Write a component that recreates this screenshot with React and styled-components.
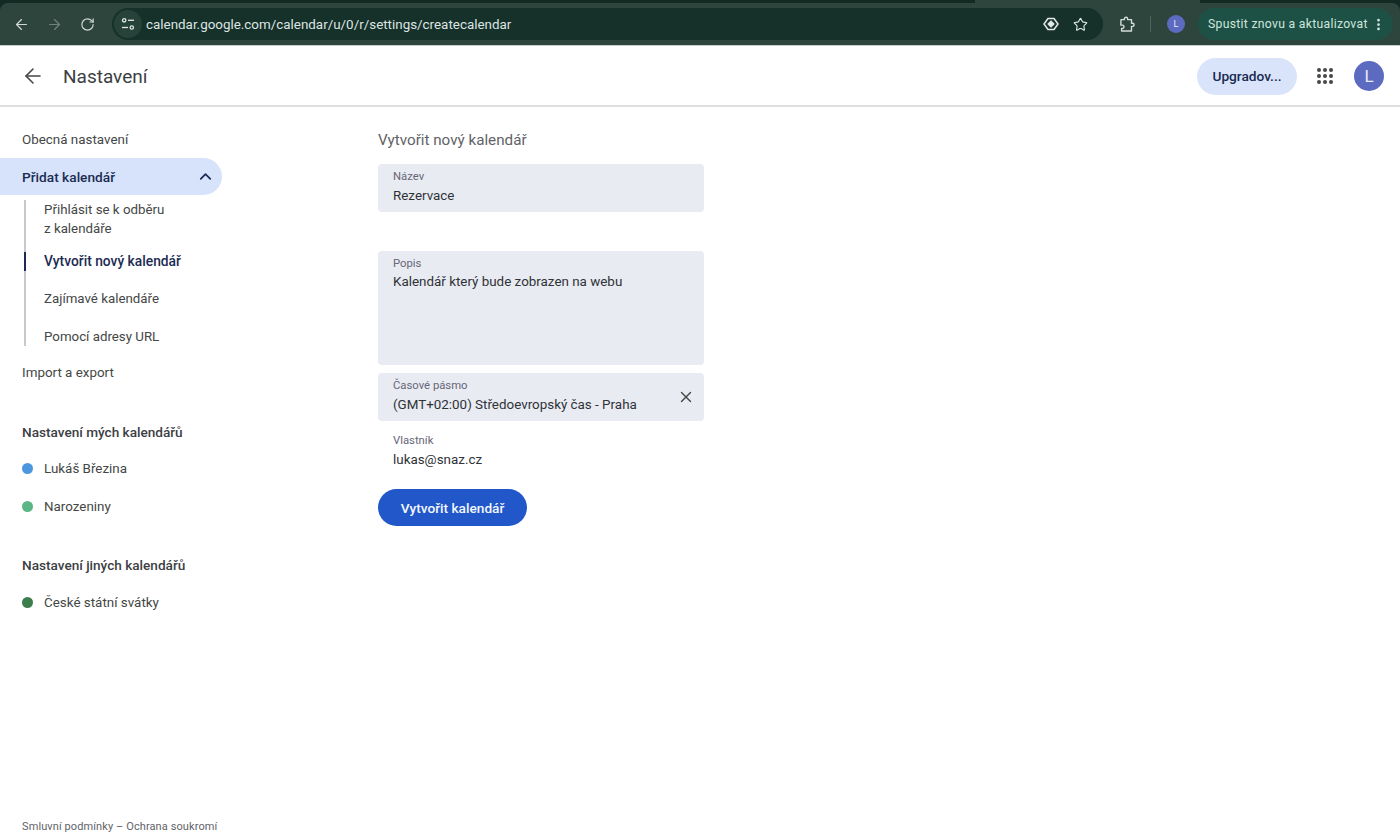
import React from "react";
import styled, { createGlobalStyle } from "styled-components";
import { ArrowLeft, ArrowRight, RotateCw, Star, X, ChevronUp, EllipsisVertical } from "lucide-react";

const Global = createGlobalStyle`
  html, body { margin: 0; padding: 0; background: #fff; }
  body { font-family: Roboto, "Noto Sans", "Liberation Sans", sans-serif; overflow: hidden; }
  * { box-sizing: border-box; }
`;

const Page = styled.div`
  width: 1400px; height: 840px; display: flex; flex-direction: column; overflow: hidden;
`;

const Chrome = styled.div`
  height: 46px; background: #122a24; position: relative; padding-top: 3px; flex: none;
`;
const TabJoin = styled.div`
  position: absolute; left: 975px; width: 225px; top: 0; height: 3px; background: #2e453e;
`;
const Toolbar = styled.div`
  height: 43px; background: #2e453e; border-radius: 8px 8px 0 0; display: flex; align-items: center;
  padding: 0 7px 0 0; border-bottom: 1px solid #c9cdcb;
`;
const NavIcons = styled.div`
  display: flex; align-items: center; width: 112px; padding-left: 13px; gap: 16px; flex: none;
`;
const NavIcon = styled.span`
  display: flex; width: 17px; justify-content: center; color: ${p => (p.$dim ? "#6f8279" : "#cfd9d5")};
`;
const Omnibox = styled.div`
  width: 991px; height: 32px; border-radius: 16px; background: #16302a; display: flex; align-items: center; flex: none;
  padding: 0 14px 0 2px; color: #dfe6e3;
`;
const TuneChip = styled.span`
  width: 28px; height: 28px; border-radius: 50%; background: #274239; display: flex; align-items: center; justify-content: center; flex: none;
`;
const Url = styled.span`
  font-size: 13.4px; margin-left: 4px; flex: 1; color: #dde5e2;
`;
const OmniIcons = styled.div`
  display: flex; align-items: center; gap: 14px; margin-right: 1px; color: #dfe6e3;
`;
const ToolGroup = styled.div`
  display: flex; align-items: center; margin-left: 15px; color: #cfd9d5; flex: 1;
`;
const Divider = styled.span`
  width: 1px; height: 16px; background: #4d655d; margin: 0 16px 0 15px;
`;
const MiniAvatar = styled.span`
  width: 18px; height: 18px; border-radius: 50%; background: #5c6bc0; color: #e8eaf6; font-size: 9px;
  display: flex; align-items: center; justify-content: center; flex: none;
`;
const UpdatePill = styled.div`
  width: 195px; height: 32px; border-radius: 16px; background: #1d5146; color: #cfe5dd; flex: none; white-space: nowrap;
  display: flex; align-items: center; justify-content: space-between; font-size: 12.2px; letter-spacing: 0.3px; padding: 0 7px 0 10px;
`;

const Header = styled.header`
  height: 61px; flex: none; display: flex; align-items: center; border-bottom: 2px solid #dedfe1; padding: 1px 16px 0 21px;
`;
const HeaderTitle = styled.h1`
  margin: 0 0 0 18px; font-size: 19px; font-weight: 400; color: #3c4043; flex: 1;
`;
const UpgradeButton = styled.button`
  width: 100px; height: 37px; border: 0; border-radius: 19px; background: #d9e4fb; color: #1a2a50;
  font: 500 13.7px Roboto, sans-serif; padding: 0;
`;
const Waffle = styled.span`
  margin: 0 21px 0 20px; display: grid; grid-template-columns: repeat(3, 4px); gap: 2px; flex: none;
`;
const WaffleDot = styled.i`
  width: 4px; height: 4px; border-radius: 50%; background: #444746; display: block;
`;
const Avatar = styled.span`
  width: 30px; height: 30px; border-radius: 50%; background: #5c6bc0; color: #e8eaf6; font-size: 17px;
  display: flex; align-items: center; justify-content: center; flex: none;
`;

const Body = styled.div`
  flex: 1; display: flex; min-height: 0;
`;
const Sidebar = styled.nav`
  width: 378px; flex: none; display: flex; flex-direction: column; padding-top: 14px; color: #3c4043;
`;
const NavItem = styled.div`
  height: 37px; padding-left: 22px; display: flex; align-items: center; font-size: 13.4px; color: #444746;
`;
const ActiveNav = styled.div`
  width: 222px; height: 37px; border-radius: 0 19px 19px 0; background: #d6e3fb; display: flex; align-items: center;
  justify-content: space-between; padding: 0 7px 0 22px; font-size: 13.7px; font-weight: 500; color: #1c2b52;
`;
const SubList = styled.div`
  margin: 5px 0 8.5px 24px; border-left: 2px solid #c8c9cb; display: flex; flex-direction: column;
`;
const SubWrap = styled.div`
  margin-left: -2px; padding: 1px 0 4.5px 20px; font-size: 13.3px; line-height: 18.5px; color: #444746;
`;
const SubItem = styled.div`
  height: 19px; margin: 9.25px 0; padding-left: 18px; margin-left: -2px; display: flex; align-items: center; font-size: 13.3px;
  color: #444746; border-left: 2px solid transparent;
  &:last-child { margin-bottom: 0; }
`;
const ActiveSubItem = styled(SubItem)`
  color: #1c2b52; font-weight: 500; font-size: 13.8px; border-left-color: #1c2b52;
`;
const SectionTitle = styled.div`
  height: 37px; margin-top: 22px; padding-left: 22px; display: flex; align-items: center; font-size: 13.6px; font-weight: 500;
  color: #3c4043;
`;
const CalendarRow = styled.div`
  height: 37.25px; padding-left: 22px; display: flex; align-items: center; gap: 11px; font-size: 13.4px; color: #444746;
`;
const Dot = styled.span`
  width: 11px; height: 11px; border-radius: 50%; background: ${p => p.$color}; flex: none;
`;
const FooterLinks = styled.div`
  margin-top: auto; padding: 0 0 7px 22px; font-size: 11px; letter-spacing: 0.1px; color: #5f6368;
`;

const Main = styled.main`
  flex: 1; padding-top: 23px; display: flex; flex-direction: column; align-items: flex-start;
`;
const PageTitle = styled.h2`
  margin: 0 0 14px; height: 20px; line-height: 20px; font-size: 15.2px; font-weight: 400; color: #5f6368;
`;
const Field = styled.div`
  width: 326px; height: ${p => p.$h || 48}px; margin-bottom: ${p => p.$mb}px; background: #e9ebf3; border-radius: 4px;
  padding: 6px 15px 0; display: flex; flex-direction: column; position: relative;
`;
const FieldLabel = styled.span`
  font-size: 11.3px; line-height: 14px; color: #667;
`;
const FieldValue = styled.span`
  margin-top: ${p => p.$mt ?? 2}px; font-size: 13.4px; line-height: 19px; color: #2f3236;
`;
const ClearIcon = styled.span`
  position: absolute; right: 9px; top: 15px; display: flex; color: #444746;
`;
const Owner = styled.div`
  padding: 0 15px; display: flex; flex-direction: column;
`;
const CreateButton = styled.button`
  width: 149px; height: 37px; margin-top: 20px; border: 0; border-radius: 19px; background: #2257c9; color: #f4f7fe;
  font: 500 13.7px Roboto, sans-serif; padding: 0;
`;

const TuneIcon = () => (
  <svg width="14" height="14" viewBox="0 0 14 14" fill="none" stroke="#dfe6e3" strokeWidth="1.3">
    <circle cx="3.2" cy="3.3" r="1.7" />
    <path d="M7 3.3h6" />
    <path d="M1 10.5h6" />
    <circle cx="10.8" cy="10.5" r="1.7" />
  </svg>
);
const GemIcon = () => (
  <svg width="16" height="14" viewBox="0 0 16 14" fill="none" stroke="#e3e9e6" strokeWidth="1.5">
    <path d="M5 1.5 1 7l4 5.5h6L15 7l-4-5.5z" />
    <path d="M8 3.2 11.8 7 8 10.8 4.2 7z" fill="#e3e9e6" stroke="none" />
  </svg>
);
const PuzzleIcon = () => (
  <svg width="17" height="17" viewBox="0 0 17 17" fill="none" stroke="#d3dcd8" strokeWidth="1.4" strokeLinejoin="round">
    <path d="M3 3.6h3.4V2.8a1.6 1.6 0 0 1 3.2 0v.8h3.9v3.6h1a1.5 1.5 0 0 1 0 3.2h-1v4.6H3.6v-2.5h.7a1.7 1.7 0 0 0 0-3.4H2.8z" />
  </svg>
);

export default function App() {
  return (
    <Page>
      <Global />
      <Chrome>
        <TabJoin />
        <Toolbar>
          <NavIcons>
            <NavIcon><ArrowLeft size={17} strokeWidth={1.7} /></NavIcon>
            <NavIcon $dim><ArrowRight size={17} strokeWidth={1.7} /></NavIcon>
            <NavIcon><RotateCw size={15} strokeWidth={1.9} /></NavIcon>
          </NavIcons>
          <Omnibox>
            <TuneChip><TuneIcon /></TuneChip>
            <Url>calendar.google.com/calendar/u/0/r/settings/createcalendar</Url>
            <OmniIcons>
              <GemIcon />
              <Star size={15} strokeWidth={1.8} />
            </OmniIcons>
          </Omnibox>
          <ToolGroup>
            <PuzzleIcon />
            <Divider />
            <MiniAvatar>L</MiniAvatar>
          </ToolGroup>
          <UpdatePill>
            Spustit znovu a aktualizovat
            <EllipsisVertical size={15} strokeWidth={2.4} />
          </UpdatePill>
        </Toolbar>
      </Chrome>
      <Header>
        <ArrowLeft size={24} strokeWidth={1.6} color="#444746" />
        <HeaderTitle>Nastavení</HeaderTitle>
        <UpgradeButton>Upgradov...</UpgradeButton>
        <Waffle>
          {Array.from({ length: 9 }, (_, i) => <WaffleDot key={i} />)}
        </Waffle>
        <Avatar>L</Avatar>
      </Header>
      <Body>
        <Sidebar>
          <NavItem>Obecná nastavení</NavItem>
          <ActiveNav>
            Přidat kalendář
            <ChevronUp size={19} strokeWidth={2.2} />
          </ActiveNav>
          <SubList>
            <SubWrap>Přihlásit se k odběru<br />z kalendáře</SubWrap>
            <ActiveSubItem>Vytvořit nový kalendář</ActiveSubItem>
            <SubItem>Zajímavé kalendáře</SubItem>
            <SubItem>Pomocí adresy URL</SubItem>
          </SubList>
          <NavItem>Import a export</NavItem>
          <SectionTitle>Nastavení mých kalendářů</SectionTitle>
          <CalendarRow><Dot $color="#4a97e0" />Lukáš Březina</CalendarRow>
          <CalendarRow><Dot $color="#5cb585" />Narozeniny</CalendarRow>
          <SectionTitle>Nastavení jiných kalendářů</SectionTitle>
          <CalendarRow><Dot $color="#3b7d4b" />České státní svátky</CalendarRow>
          <FooterLinks>Smluvní podmínky – Ochrana soukromí</FooterLinks>
        </Sidebar>
        <Main>
          <PageTitle>Vytvořit nový kalendář</PageTitle>
          <Field $mb={39}>
            <FieldLabel>Název</FieldLabel>
            <FieldValue>Rezervace</FieldValue>
          </Field>
          <Field $h={114} $mb={8}>
            <FieldLabel>Popis</FieldLabel>
            <FieldValue $mt={1}>Kalendář který bude zobrazen na webu</FieldValue>
          </Field>
          <Field $mb={13}>
            <FieldLabel>Časové pásmo</FieldLabel>
            <FieldValue>(GMT+02:00) Středoevropský čas - Praha</FieldValue>
            <ClearIcon><X size={18} strokeWidth={1.8} /></ClearIcon>
          </Field>
          <Owner>
            <FieldLabel>Vlastník</FieldLabel>
            <FieldValue>lukas@snaz.cz</FieldValue>
          </Owner>
          <CreateButton>Vytvořit kalendář</CreateButton>
        </Main>
      </Body>
    </Page>
  );
}
